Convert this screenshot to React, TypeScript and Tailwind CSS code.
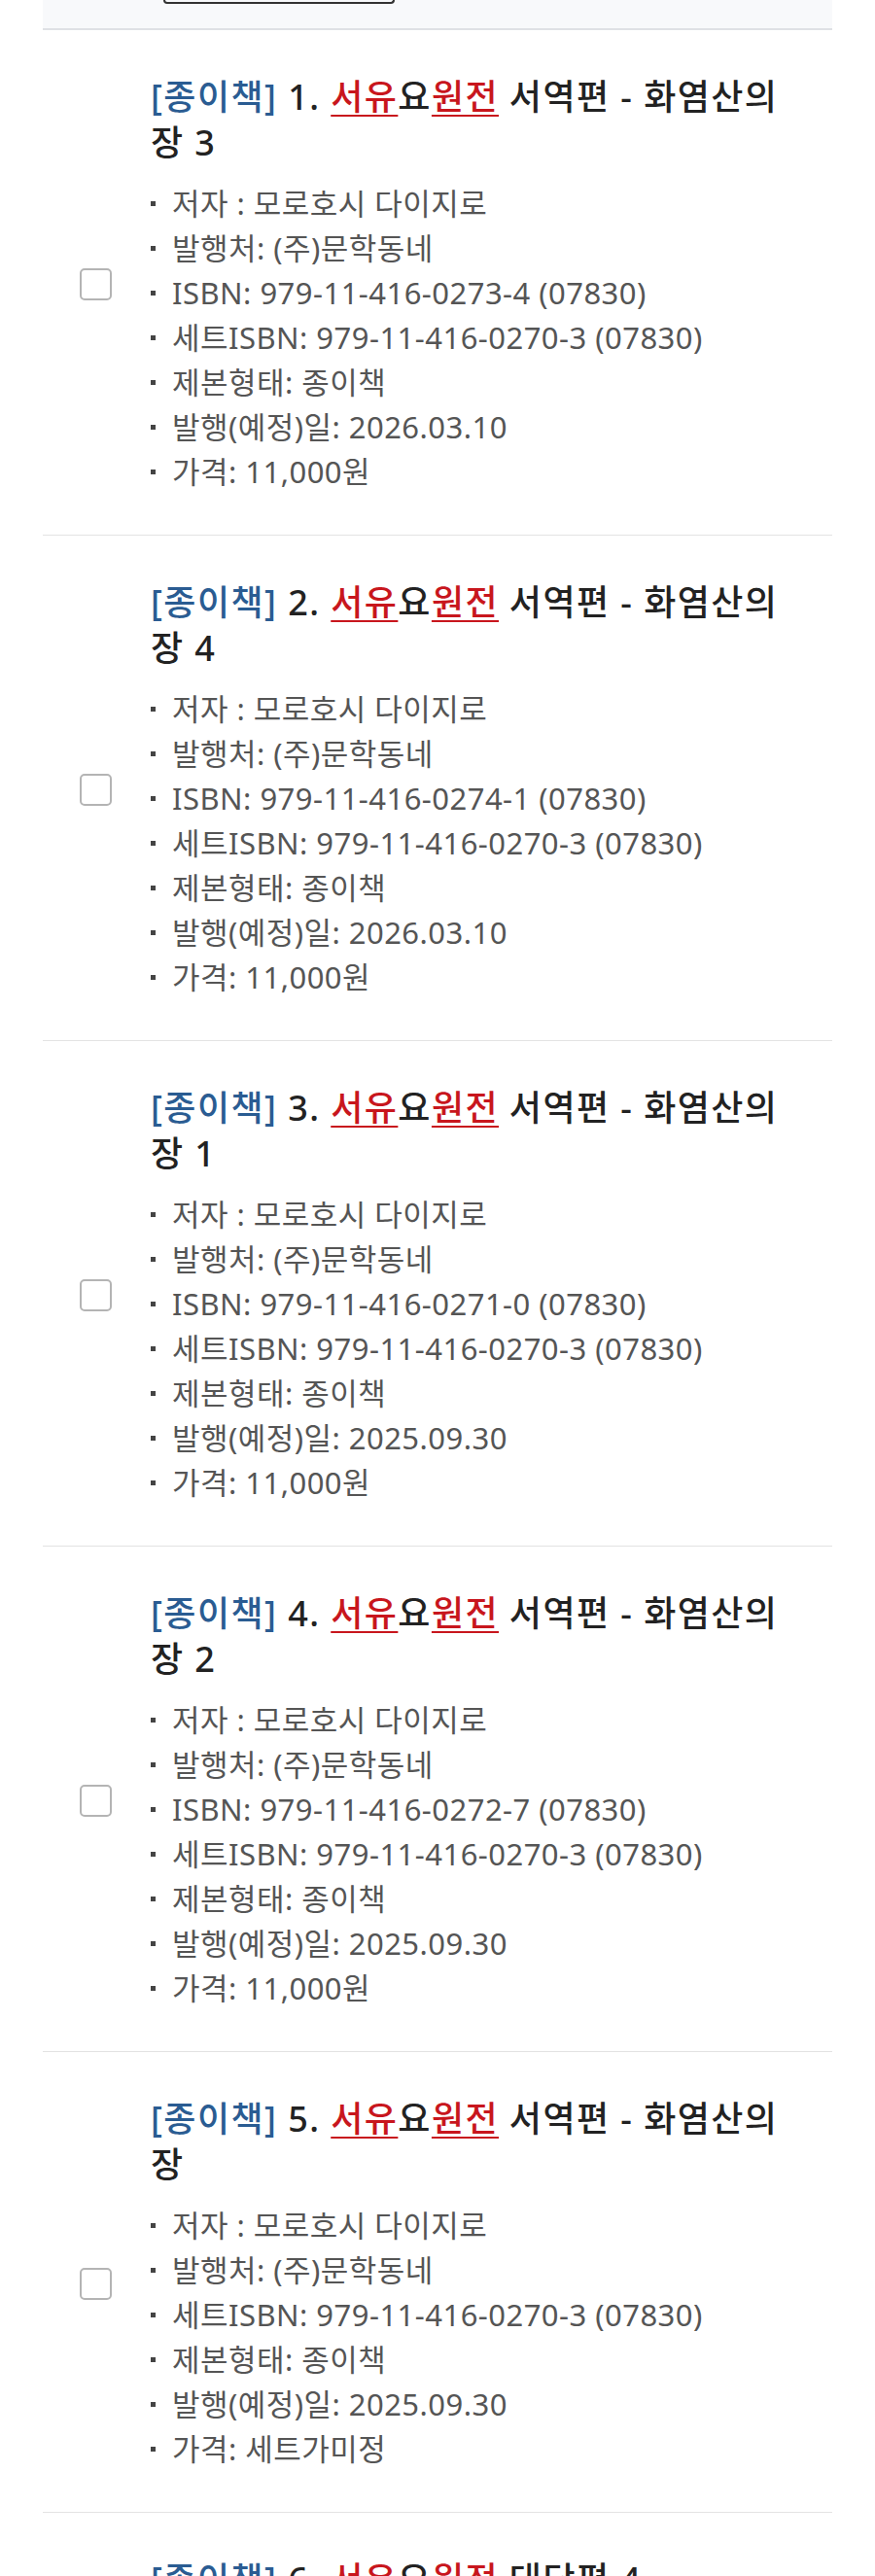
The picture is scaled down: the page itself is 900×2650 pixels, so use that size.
const books = [
  {
    no: 1,
    rest: "서역편 - 화염산의 장 3",
    isbn: "979-11-416-0273-4 (07830)",
    date: "2026.03.10",
    price: "11,000원",
  },
  {
    no: 2,
    rest: "서역편 - 화염산의 장 4",
    isbn: "979-11-416-0274-1 (07830)",
    date: "2026.03.10",
    price: "11,000원",
  },
  {
    no: 3,
    rest: "서역편 - 화염산의 장 1",
    isbn: "979-11-416-0271-0 (07830)",
    date: "2025.09.30",
    price: "11,000원",
  },
  {
    no: 4,
    rest: "서역편 - 화염산의 장 2",
    isbn: "979-11-416-0272-7 (07830)",
    date: "2025.09.30",
    price: "11,000원",
  },
  {
    no: 5,
    rest: "서역편 - 화염산의 장",
    isbn: "",
    date: "2025.09.30",
    price: "세트가미정",
  },
  {
    no: 6,
    rest: "대당편 4",
    isbn: "979-11-416-0269-7 (07830)",
    date: "2025.09.30",
    price: "11,000원",
  },
];

function Highlight({ children }: { children: React.ReactNode }) {
  return (
    <span className="text-[#c8161d] underline decoration-2 underline-offset-[5px]">
      {children}
    </span>
  );
}

function BookRow({ book }: { book: (typeof books)[number] }) {
  const details = [
    "저자 : 모로호시 다이지로",
    "발행처: (주)문학동네",
    book.isbn ? `ISBN: ${book.isbn}` : null,
    "세트ISBN: 979-11-416-0270-3 (07830)",
    "제본형태: 종이책",
    `발행(예정)일: ${book.date}`,
    `가격: ${book.price}`,
  ].filter(Boolean) as string[];

  return (
    <li className="flex items-center border-b border-[#e3e3e3] pl-[38px] pr-[32px] pt-[45px] pb-[42px]">
      <input
        type="checkbox"
        className="h-[33px] w-[33px] shrink-0 appearance-none rounded-[5px] border-2 border-[#b4b4b4] bg-white"
      />
      <div className="ml-[40px] min-w-0 flex-1">
        <h3 className="text-[36px] font-medium leading-[47px] tracking-[0.04em] text-[#222]">
          <span className="text-[#2a5c92]">[종이책]</span> {book.no}.{" "}
          <Highlight>서유</Highlight>요<Highlight>원전</Highlight> {book.rest}
        </h3>
        <ul className="mt-[16px] text-[31px] leading-[46px] tracking-[0.015em] text-[#555]">
          {details.map((d) => (
            <li key={d} className="flex items-center">
              <span className="mr-[17px] h-[5px] w-[5px] shrink-0 bg-[#444]" />
              <span>{d}</span>
            </li>
          ))}
        </ul>
      </div>
    </li>
  );
}

export default function App() {
  return (
    <div className="min-h-screen bg-white font-['Noto_Sans','Noto_Sans_CJK_KR',sans-serif]">
      <div className="mx-[44px]">
        <div className="h-[31px] border-b-2 border-[#dfe1e5] bg-[#f8f9fb]">
          <div className="ml-[124px] h-[4px] w-[238px] rounded-b-[6px] border-x-2 border-b-2 border-[#333]" />
        </div>
        <ul>
          {books.map((b) => (
            <BookRow key={b.no} book={b} />
          ))}
        </ul>
      </div>
    </div>
  );
}
